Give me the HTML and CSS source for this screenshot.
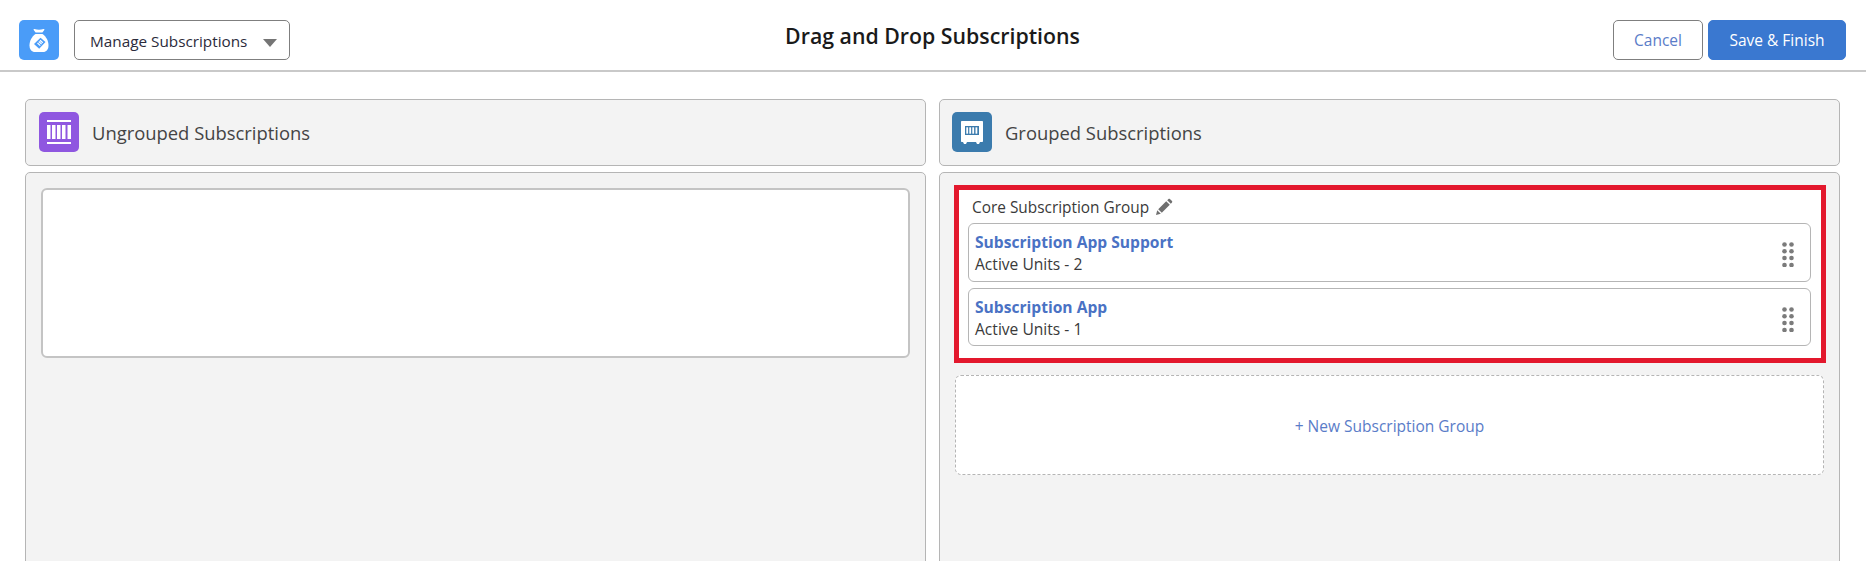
FILE: index.html
```html
<!DOCTYPE html>
<html lang="en">
<head>
<meta charset="utf-8">
<title>Drag and Drop Subscriptions</title>
<link rel="stylesheet" href="styles.css">
</head>
<body>
<header class="topbar">
  <div class="topbar-left">
    <span class="icon-tile tile-bag">
      <svg width="40" height="40" viewBox="0 0 40 40"><path fill="#fff" d="M15.500 9c2.800 1 6.200 1 9 0 .7-.2 1.100.3.800.9l-1.900 2.600h-6.800l-1.900-2.600c-.3-.6.100-1.100.8-.9z"/><path fill="#fff" d="M16.500 14h7c3.800 2.700 6 7 6 11.500 0 4-2.200 6.500-5.500 6.500h-8c-3.300 0-5.500-2.500-5.500-6.500 0-4.500 2.200-8.800 6-11.500z"/><path fill="#4a9cf8" d="M21.500 17.800l5 4.200-6.300 6.700-5.200-4.700z"/><path stroke="#fff" stroke-width="1.200" d="M19.800 21.500l2.800 2.600M18.500 23l2.800 2.600M21 20.200l2.800 2.600"/></svg>
    </span>
    <button class="select-btn" type="button"><span class="select-label">Manage Subscriptions</span><span class="caret"></span></button>
  </div>
  <h1 class="page-title">Drag and Drop Subscriptions</h1>
  <div class="topbar-actions">
    <button class="btn btn-cancel" type="button">Cancel</button>
    <button class="btn btn-save" type="button">Save &amp; Finish</button>
  </div>
</header>
<main class="columns">
  <section class="column">
    <div class="panel-head">
      <span class="icon-tile tile-purple">
        <svg width="40" height="40" viewBox="0 0 40 40"><g fill="#fff"><rect x="8" y="8" width="24" height="2"/><rect x="8" y="30" width="24" height="2"/><rect x="8" y="13" width="3.500" height="14"/><rect x="13" y="13" width="3.500" height="14"/><rect x="18" y="13" width="3.500" height="14"/><rect x="23" y="13" width="3.500" height="14"/><rect x="28.500" y="13" width="3.500" height="14"/></g></svg>
      </span>
      <h2 class="panel-title">Ungrouped Subscriptions</h2>
    </div>
    <div class="panel-body panel-body-left">
      <div class="drop-empty"></div>
    </div>
  </section>
  <section class="column">
    <div class="panel-head panel-head-right">
      <span class="icon-tile tile-teal">
        <svg width="40" height="40" viewBox="0 0 40 40"><path fill="#fff" d="M10 9h20c.6 0 1 .4 1 1v19c0 .6-.4 1-1 1h-2l-1 2h-2l-1-2H15l-1 2h-2l-1-2h-1c-.6 0-1-.4-1-1V10c0-.6.4-1 1-1z"/><rect x="13" y="14" width="14" height="9" fill="#3b7bad"/><g fill="#fff"><rect x="14.300" y="15.300" width="1.800" height="6.400"/><rect x="17.300" y="15.300" width="1.800" height="6.400"/><rect x="20.300" y="15.300" width="1.800" height="6.400"/><rect x="23.500" y="15.300" width="1.800" height="6.400"/></g></svg>
      </span>
      <h2 class="panel-title">Grouped Subscriptions</h2>
    </div>
    <div class="panel-body panel-body-right">
      <div class="group-highlight">
        <div class="group-name"><span class="group-label">Core Subscription Group</span>
          <svg class="pencil" width="18" height="18" viewBox="0 0 18 18"><path fill="#6f6f6f" d="M1 17l1.200-4.800L5.800 15.800zM3.200 11.200l8-8 3.600 3.600-8 8zM12.200 2.200l1.300-1.200c.4-.4 1-.4 1.400 0l2.100 2.100c.4.400.4 1 0 1.400l-1.200 1.300z"/></svg>
        </div>
        <article class="sub-card">
          <div><a class="sub-link">Subscription App Support</a><p class="sub-meta">Active Units - 2</p></div>
          <svg class="grip" width="13" height="25" viewBox="0 0 13 25"><g fill="#7b7b7b"><circle cx="2.500" cy="2.500" r="2.300"/><circle cx="9.500" cy="2.500" r="2.300"/><circle cx="2.500" cy="9.300" r="2.300"/><circle cx="9.500" cy="9.300" r="2.300"/><circle cx="2.500" cy="16" r="2.300"/><circle cx="9.500" cy="16" r="2.300"/><circle cx="2.500" cy="23" r="2.300"/><circle cx="9.500" cy="23" r="2.300"/></g></svg>
        </article>
        <article class="sub-card">
          <div><a class="sub-link">Subscription App</a><p class="sub-meta">Active Units - 1</p></div>
          <svg class="grip" width="13" height="25" viewBox="0 0 13 25"><g fill="#7b7b7b"><circle cx="2.500" cy="2.500" r="2.300"/><circle cx="9.500" cy="2.500" r="2.300"/><circle cx="2.500" cy="9.300" r="2.300"/><circle cx="9.500" cy="9.300" r="2.300"/><circle cx="2.500" cy="16" r="2.300"/><circle cx="9.500" cy="16" r="2.300"/><circle cx="2.500" cy="23" r="2.300"/><circle cx="9.500" cy="23" r="2.300"/></g></svg>
        </article>
      </div>
      <div class="new-group"><a class="new-group-link">+ New Subscription Group</a></div>
    </div>
  </section>
</main>
</body>
</html>
```
FILE: styles.css
```css
* { box-sizing: border-box; }
html, body { margin: 0; height: 561px; overflow: hidden; background: #fff; }
body { font-family: "Open Sans", "Noto Sans", sans-serif; color: #2b2b2b; }
h1, h2, p { margin: 0; }

.topbar {
  height: 72px;
  padding: 20px 20px 0 19px;
  border-bottom: 2px solid #c9c9c9;
  display: grid;
  grid-template-columns: 1fr auto 1fr;
  align-items: start;
}
.topbar-left { display: flex; gap: 15px; }
.icon-tile { width: 40px; height: 40px; border-radius: 5px; display: block; flex: none; }
.icon-tile svg { display: block; }
.tile-bag { background: #4a9cf8; }
.tile-purple { background: #8f57e0; }
.tile-teal { background: #3b7bad; }

.select-btn {
  width: 216px; height: 40px;
  padding: 0 12px 0 15px;
  display: flex; align-items: center; justify-content: space-between;
  background: #fff;
  border: 1px solid #7f7f7f;
  border-radius: 5px;
  font: 15.300px "Open Sans", sans-serif;
  color: #2b2b3b;
}
.select-label { padding-top: 1px; }
.caret { width: 0; height: 0; border-left: 7px solid transparent; border-right: 7px solid transparent; border-top: 8px solid #757575; margin-top: 5px; }

.page-title { font-size: 21.300px; font-weight: 600; line-height: 24px; margin-top: 4px; color: #1a1a1a; }

.topbar-actions { display: flex; gap: 5px; justify-content: flex-end; }
.btn { height: 40px; border-radius: 5px; font: 15.500px "Open Sans", sans-serif; padding: 0; }
.btn-cancel { width: 90px; background: #fff; border: 1px solid #7f7f7f; color: #5a7cc8; }
.btn-save { width: 138px; background: #3a78d0; border: 1px solid #3a78d0; color: #fff; }

.columns {
  display: grid;
  grid-template-columns: 901px 901px;
  column-gap: 13px;
  padding: 27px 26px 0 25px;
}
.column { display: flex; flex-direction: column; gap: 6px; }

.panel-head {
  height: 67px;
  padding: 12px 13px;
  display: flex; align-items: flex-start; gap: 13px;
  background: #f3f3f3;
  border: 1px solid #b5b5b5;
  border-radius: 5px;
}
.panel-head-right { padding-left: 12px; }
.panel-title { font-size: 18.400px; font-weight: 400; line-height: 42px; color: #444; }

.panel-body {
  height: 400px;
  background: #f3f3f3;
  border: 1px solid #b5b5b5;
  border-radius: 5px;
}
.panel-body-left { padding: 15px 15px 0 15px; }
.panel-body-right { padding: 12px 13px 0 14px; }

.drop-empty {
  height: 170px;
  background: #fff;
  border: 2px solid #c4c4c4;
  border-radius: 6px;
}

.group-highlight {
  height: 178px;
  background: #fff;
  border: 5px solid #e3182d;
  padding: 6px 10px 0 9px;
  display: flex; flex-direction: column;
  gap: 6px;
}
.group-name {
  height: 21px;
  padding-left: 4px;
  font-size: 15.400px;
  line-height: 21px;
  color: #3a3a3a;
  display: flex; align-items: center; gap: 6px;
}
.group-label { padding-top: 1px; }
.pencil { display: block; }

.sub-card {
  height: 58.500px;
  padding: 8px 15px 0 6px;
  background: #fff;
  border: 1px solid #b5b5b5;
  border-radius: 6px;
  display: flex; justify-content: space-between; align-items: flex-start;
}
.sub-link { display: block; font-size: 15.600px; font-weight: 700; line-height: 20px; color: #4a72c4; }
.sub-meta { font-size: 15.600px; line-height: 24px; color: #3a3a3a; }
.grip { display: block; margin-top: 10px; }

.new-group {
  width: 869px;
  height: 100px;
  margin: 12px 0 0 1px;
  background: #fff;
  border: 1px dashed #b5b5b5;
  border-radius: 6px;
  display: flex; align-items: center; justify-content: center;
  padding-top: 2px;
}
.new-group-link { font-size: 15.500px; color: #5a7cc8; }
```
